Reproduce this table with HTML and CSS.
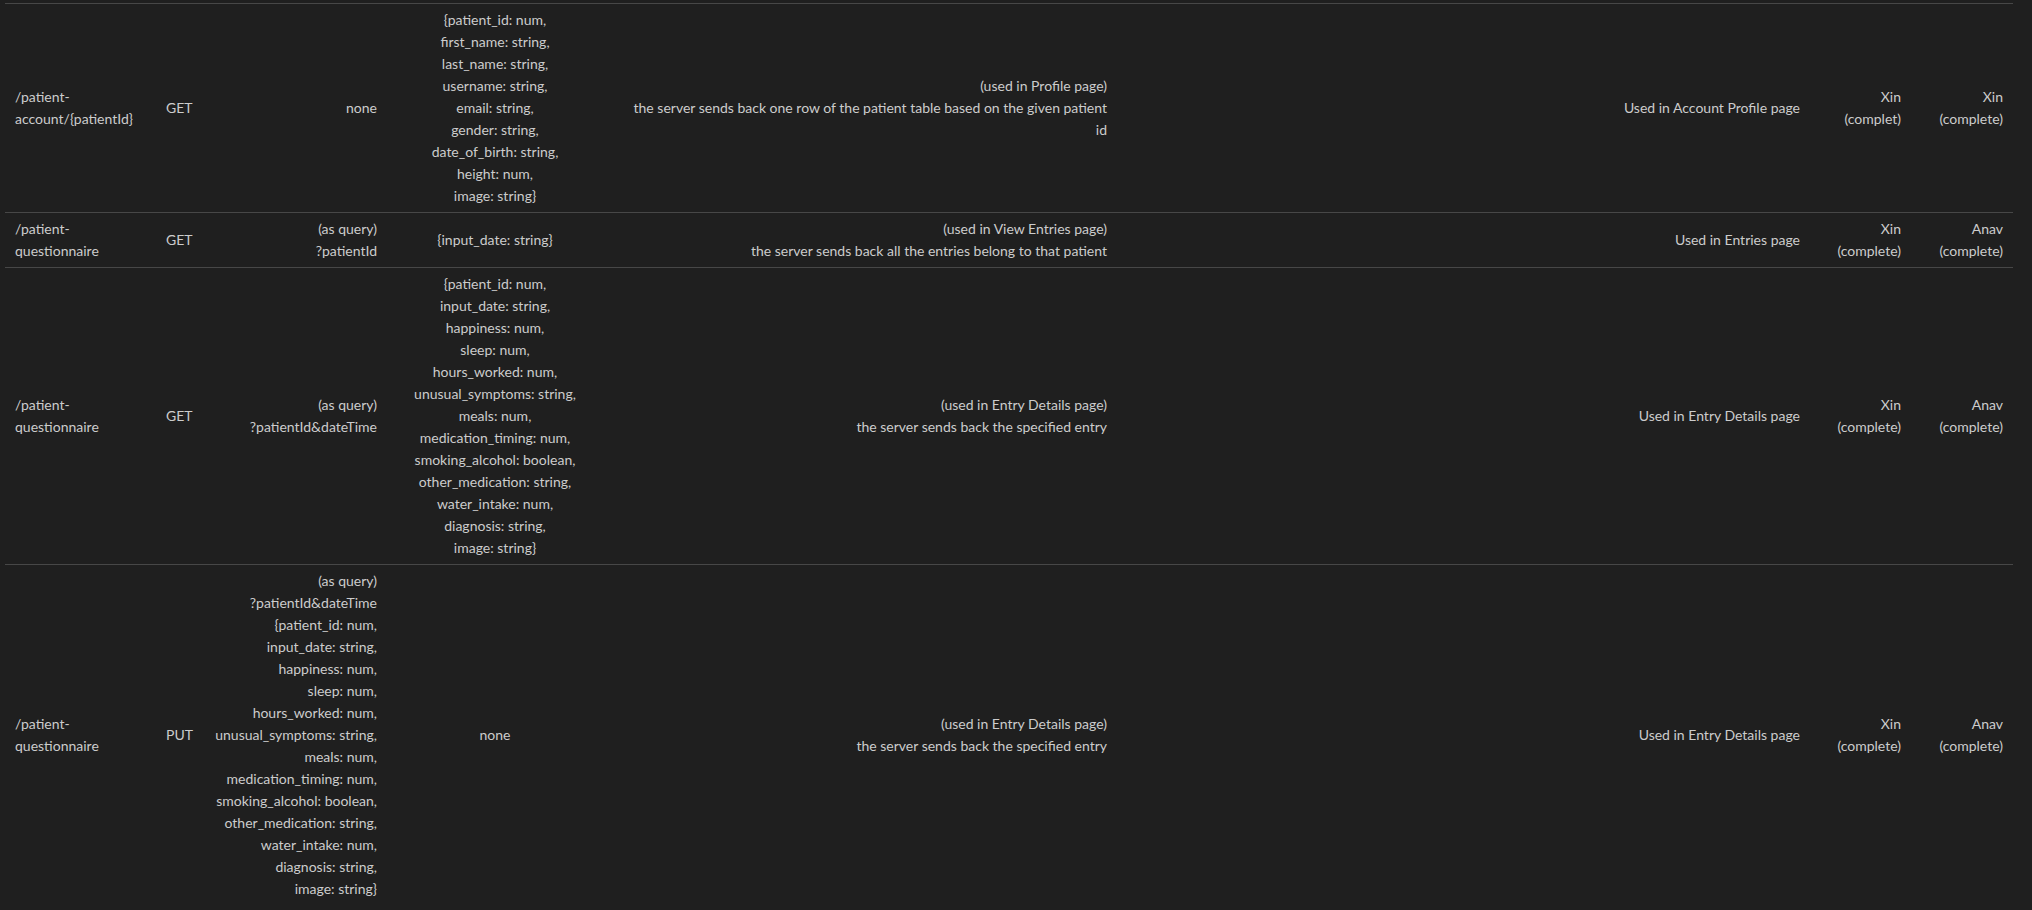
FILE: index.html
```html
<!DOCTYPE html>
<html lang="en">
<head>
<meta charset="utf-8">
<title>API table</title>
<link rel="stylesheet" href="styles.css">
</head>
<body>
<table class="api">
  <colgroup>
    <col class="c-route"><col class="c-method"><col class="c-req"><col class="c-res"><col class="c-desc"><col class="c-use"><col class="c-fe"><col class="c-be">
  </colgroup>
  <tbody>
    <tr>
      <td class="left">/patient-account/{patientId}</td>
      <td class="left">GET</td>
      <td class="right">none</td>
      <td class="center">{patient_id: num,<br>first_name: string,<br>last_name: string,<br>username: string,<br>email: string,<br>gender: string,<br>date_of_birth: string,<br>height: num,<br>image: string}</td>
      <td class="right desc">(used in Profile page)<br>the server sends back one row of the patient table based on the given patient id</td>
      <td class="right">Used in Account Profile page</td>
      <td class="right">Xin<br>(complet)</td>
      <td class="right">Xin (complete)</td>
    </tr>
    <tr>
      <td class="left">/patient-questionnaire</td>
      <td class="left">GET</td>
      <td class="right">(as query)<br>?patientId</td>
      <td class="center">{input_date: string}</td>
      <td class="right desc">(used in View Entries page)<br>the server sends back all the entries belong to that patient</td>
      <td class="right">Used in Entries page</td>
      <td class="right">Xin (complete)</td>
      <td class="right">Anav (complete)</td>
    </tr>
    <tr>
      <td class="left">/patient-questionnaire</td>
      <td class="left">GET</td>
      <td class="right">(as query)<br>?patientId&amp;dateTime</td>
      <td class="center">{patient_id: num,<br>input_date: string,<br>happiness: num,<br>sleep: num,<br>hours_worked: num,<br>unusual_symptoms: string,<br>meals: num,<br>medication_timing: num,<br>smoking_alcohol: boolean,<br>other_medication: string,<br>water_intake: num,<br>diagnosis: string,<br>image: string}</td>
      <td class="right desc">(used in Entry Details page)<br>the server sends back the specified entry</td>
      <td class="right">Used in Entry Details page</td>
      <td class="right">Xin (complete)</td>
      <td class="right">Anav (complete)</td>
    </tr>
    <tr>
      <td class="left">/patient-questionnaire</td>
      <td class="left">PUT</td>
      <td class="right">(as query)<br>?patientId&amp;dateTime<br>{patient_id: num,<br>input_date: string,<br>happiness: num,<br>sleep: num,<br>hours_worked: num,<br>unusual_symptoms: string,<br>meals: num,<br>medication_timing: num,<br>smoking_alcohol: boolean,<br>other_medication: string,<br>water_intake: num,<br>diagnosis: string,<br>image: string}</td>
      <td class="center">none</td>
      <td class="right desc">(used in Entry Details page)<br>the server sends back the specified entry</td>
      <td class="right">Used in Entry Details page</td>
      <td class="right">Xin (complete)</td>
      <td class="right">Anav (complete)</td>
    </tr>
  </tbody>
</table>
</body>
</html>
```

FILE: styles.css
```css
html, body {
  margin: 0;
  padding: 0;
  background: #1f1f1f;
}

body {
  color: #cccccc;
  font-family: Lato, "Noto Sans", sans-serif;
  font-size: 14px;
  line-height: 22px;
  overflow: hidden;
}

.api {
  border-collapse: collapse;
  table-layout: fixed;
  width: 2008px;
  margin: 3px 0 0 5px;
}

.c-route { width: 151px; }
.c-method { width: 48px; }
.c-req { width: 183px; }
.c-res { width: 216px; }
.c-desc { width: 514px; }
.c-use { width: 693px; }
.c-fe { width: 101px; }
.c-be { width: 102px; }

.api td {
  padding: 5px 10px;
  border-top: 1px solid #474747;
  vertical-align: middle;
}

.api td.desc {
  padding-left: 26px;
}

.left { text-align: left; }
.right { text-align: right; }
.center { text-align: center; }
```
